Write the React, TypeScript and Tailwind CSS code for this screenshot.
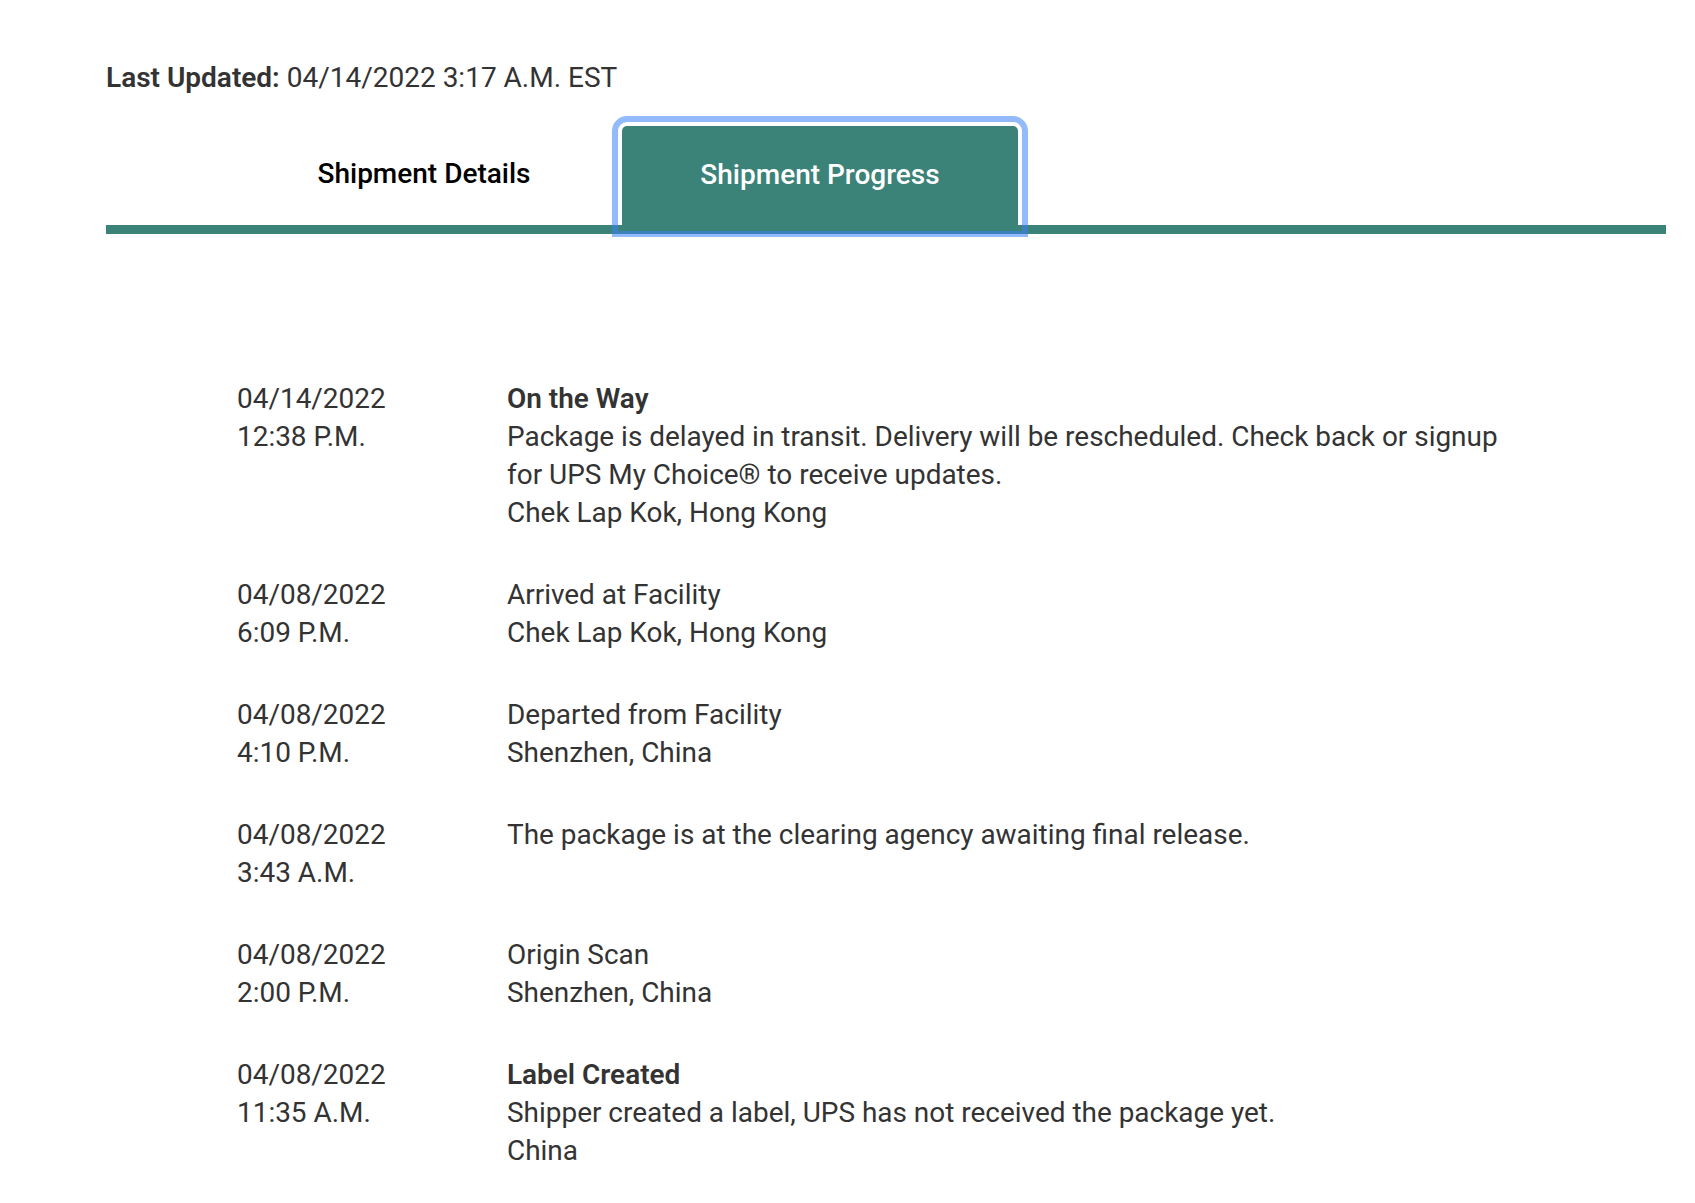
import React from "react";

const events = [
  {
    date: "04/14/2022",
    time: "12:38 P.M.",
    title: "On the Way",
    lines: [
      "Package is delayed in transit. Delivery will be rescheduled. Check back or signup for UPS My Choice® to receive updates.",
      "Chek Lap Kok, Hong Kong",
    ],
  },
  { date: "04/08/2022", time: "6:09 P.M.", lines: ["Arrived at Facility", "Chek Lap Kok, Hong Kong"] },
  { date: "04/08/2022", time: "4:10 P.M.", lines: ["Departed from Facility", "Shenzhen, China"] },
  { date: "04/08/2022", time: "3:43 A.M.", lines: ["The package is at the clearing agency awaiting final release."] },
  { date: "04/08/2022", time: "2:00 P.M.", lines: ["Origin Scan", "Shenzhen, China"] },
  {
    date: "04/08/2022",
    time: "11:35 A.M.",
    title: "Label Created",
    lines: ["Shipper created a label, UPS has not received the package yet.", "China"],
  },
];

export default function App() {
  return (
    <div
      className="min-h-[1203px] bg-white text-[#333333]"
      style={{ fontFamily: "Roboto, 'Noto Sans', sans-serif" }}
    >
      <div className="w-[1560px] ml-[106px] pt-[59px]">
        <div className="text-[28px] leading-[38px]">
          <span className="font-semibold">Last Updated:</span> 04/14/2022 3:17 A.M. EST
        </div>
        <div className="mt-[29px] flex pl-[120px] border-b-[9px] border-[#3b8279]">
          <button className="w-[396px] h-[101px] -mb-[2px] pb-[5px] flex items-center justify-center text-[28px] font-medium text-black">
            Shipment Details
          </button>
          <button className="w-[396px] h-[101px] -mb-[2px] pb-[4px] flex items-center justify-center text-[28px] font-medium text-white bg-[#3b8279] rounded-t-[5px] outline-[6px] outline-solid outline-[rgba(59,130,246,0.55)] outline-offset-[4px]">
            Shipment Progress
          </button>
        </div>
        <div className="mt-[146px] pl-[131px] flex flex-col gap-[44px] text-[27.95px] leading-[38px]">
          {events.map((e, i) => (
            <div key={i} className="flex">
              <div className="w-[270px] shrink-0">
                <div>{e.date}</div>
                <div>{e.time}</div>
              </div>
              <div className="w-[1010px]">
                {e.title && <div className="font-semibold">{e.title}</div>}
                {e.lines.map((l, j) => (
                  <div key={j}>{l}</div>
                ))}
              </div>
            </div>
          ))}
        </div>
      </div>
    </div>
  );
}
